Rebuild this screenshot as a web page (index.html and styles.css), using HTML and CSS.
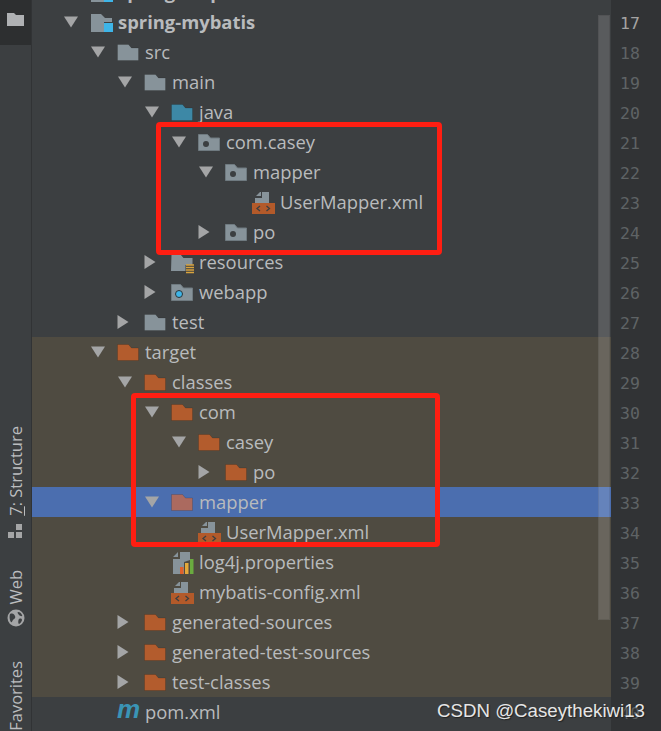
FILE: index.html
```html
<!DOCTYPE html>
<html lang="en">
<head>
<meta charset="utf-8">
<title>Project tree</title>
<link rel="stylesheet" href="styles.css">
</head>
<body>
<svg class="defs" width="0" height="0" aria-hidden="true">
  <defs>
    <symbol id="open" viewBox="0 0 14 12"><path d="M0 0.5h14L7 11.5z" fill="#a4a5a6"/></symbol>
    <symbol id="closed" viewBox="0 0 12 14"><path d="M0.5 0L11.5 7L0.5 14z" fill="#a4a5a6"/></symbol>
    <symbol id="folder" viewBox="0 0 22 17"><path d="M0.5 0.5h11l3 3.5h7v12.5h-21z" fill="currentColor" stroke="#000" stroke-opacity=".14"/></symbol>
    <symbol id="pkg" viewBox="0 0 22 17"><path d="M0.5 0.5h9l3 3.5h9v12.5h-21z" fill="#87939a" stroke="#6f7a80"/><circle cx="8" cy="10" r="3" fill="#3c3f41"/></symbol>
    <symbol id="module" viewBox="0 0 24 24"><path d="M1 3h10l4 4h7v4h-8v10H1z" fill="#87939a"/><rect x="14" y="12" width="9" height="9" fill="#3eb5e8"/></symbol>
    <symbol id="res" viewBox="0 0 24 24"><path d="M0.5 3.5h9l3 3.5h9v7h-7v6h-14.500z" fill="#87939a"/><path d="M15 14h8M15 16.500h8M15 19h8M15 21.500h8" stroke="#d8a33e" stroke-width="1.600"/></symbol>
    <symbol id="web" viewBox="0 0 22 17"><path d="M0.5 0.500h9l3 3.500h9v12.500h-21z" fill="#87939a" stroke="#6f7a80"/><circle cx="8" cy="10" r="3.500" fill="#3eb5e8" stroke="#2e3436"/></symbol>
    <symbol id="xml" viewBox="0 0 24 24"><path d="M8 1l-4 4h5V1zM10 1h7v11H3V7h7z" fill="#87939a"/><rect x="0" y="12" width="23" height="11" fill="#b35a2a"/><path d="M8 15l-3 2.500l3 2.500M14.500 15l3 2.500l-3 2.500" fill="none" stroke="#3c3f41" stroke-width="1.300"/></symbol>
    <symbol id="props" viewBox="0 0 24 24"><path d="M7 1L2 6h5zM9 1h10v8l-6 2v12H2V8h7z" fill="#87939a"/><rect x="9" y="16" width="3.500" height="7" fill="#e0612a"/><rect x="14" y="12" width="3.500" height="11" fill="#e5a93a"/><rect x="19" y="8" width="3.500" height="15" fill="#6aab3f"/></symbol>
  </defs>
</svg>

<div class="app">
  <aside class="sidebar">
    <div class="tool-active">
      <svg class="tool-folder" viewBox="0 0 17 13"><path d="M0 0h7l2 2h8v11H0z" fill="#afb1b3"/></svg>
    </div>
    <div class="tool tool-structure">
      <span class="tool-label"><u>7</u>: Structure</span>
      <svg class="tool-icon-small" viewBox="0 0 15 15"><path d="M8 0h6v6H8zM0 8h6v6H0zM8 8h6v6H8z" fill="#a4a5a6"/></svg>
    </div>
    <div class="tool tool-web">
      <span class="tool-label">Web</span>
      <svg class="tool-icon" viewBox="0 0 18 18"><circle cx="9" cy="9" r="8.500" fill="#a4a5a6"/><path d="M3 5c3-1 4 0 5 2s-1 3-2 4s-1 3-2 2s-2-5-1-8zM11 3c2 0 3 1 4 3s-2 1-3 0s-2-3-1-3zM12 10c2-1 3 0 3 1s-2 4-3 4s-1-4 0-5z" fill="#3c3f41"/></svg>
    </div>
    <div class="tool tool-fav">
      <span class="tool-label">Favorites</span>
    </div>
  </aside>

  <main class="tree">
    <div class="row d0 bold"><span class="arrow"></span><span class="icon"><svg class="i24"><use href="#module"/></svg></span><span class="name">spring-map</span></div>
    <div class="row d0 bold"><span class="arrow"><svg class="tw-open"><use href="#open"/></svg></span><span class="icon"><svg class="i24"><use href="#module"/></svg></span><span class="name">spring-mybatis</span></div>
    <div class="row d1"><span class="arrow"><svg class="tw-open"><use href="#open"/></svg></span><span class="icon grey"><svg class="fld"><use href="#folder"/></svg></span><span class="name">src</span></div>
    <div class="row d2"><span class="arrow"><svg class="tw-open"><use href="#open"/></svg></span><span class="icon grey"><svg class="fld"><use href="#folder"/></svg></span><span class="name">main</span></div>
    <div class="row d3"><span class="arrow"><svg class="tw-open"><use href="#open"/></svg></span><span class="icon teal"><svg class="fld"><use href="#folder"/></svg></span><span class="name">java</span></div>
    <div class="row d4"><span class="arrow"><svg class="tw-open"><use href="#open"/></svg></span><span class="icon"><svg class="fld"><use href="#pkg"/></svg></span><span class="name">com.casey</span></div>
    <div class="row d5"><span class="arrow"><svg class="tw-open"><use href="#open"/></svg></span><span class="icon"><svg class="fld"><use href="#pkg"/></svg></span><span class="name">mapper</span></div>
    <div class="row d6"><span class="arrow"></span><span class="icon"><svg class="i24"><use href="#xml"/></svg></span><span class="name">UserMapper.xml</span></div>
    <div class="row d5"><span class="arrow"><svg class="tw-closed"><use href="#closed"/></svg></span><span class="icon"><svg class="fld"><use href="#pkg"/></svg></span><span class="name">po</span></div>
    <div class="row d3"><span class="arrow"><svg class="tw-closed"><use href="#closed"/></svg></span><span class="icon"><svg class="i24"><use href="#res"/></svg></span><span class="name">resources</span></div>
    <div class="row d3"><span class="arrow"><svg class="tw-closed"><use href="#closed"/></svg></span><span class="icon"><svg class="fld"><use href="#web"/></svg></span><span class="name">webapp</span></div>
    <div class="row d2"><span class="arrow"><svg class="tw-closed"><use href="#closed"/></svg></span><span class="icon grey"><svg class="fld"><use href="#folder"/></svg></span><span class="name">test</span></div>
    <div class="row d1 excluded"><span class="arrow"><svg class="tw-open"><use href="#open"/></svg></span><span class="icon orange"><svg class="fld"><use href="#folder"/></svg></span><span class="name">target</span></div>
    <div class="row d2 excluded"><span class="arrow"><svg class="tw-open"><use href="#open"/></svg></span><span class="icon orange"><svg class="fld"><use href="#folder"/></svg></span><span class="name">classes</span></div>
    <div class="row d3 excluded"><span class="arrow"><svg class="tw-open"><use href="#open"/></svg></span><span class="icon orange"><svg class="fld"><use href="#folder"/></svg></span><span class="name">com</span></div>
    <div class="row d4 excluded"><span class="arrow"><svg class="tw-open"><use href="#open"/></svg></span><span class="icon orange"><svg class="fld"><use href="#folder"/></svg></span><span class="name">casey</span></div>
    <div class="row d5 excluded"><span class="arrow"><svg class="tw-closed"><use href="#closed"/></svg></span><span class="icon orange"><svg class="fld"><use href="#folder"/></svg></span><span class="name">po</span></div>
    <div class="row d3 selected"><span class="arrow"><svg class="tw-open"><use href="#open"/></svg></span><span class="icon dim-orange"><svg class="fld"><use href="#folder"/></svg></span><span class="name">mapper</span></div>
    <div class="row d4 excluded"><span class="arrow"></span><span class="icon"><svg class="i24"><use href="#xml"/></svg></span><span class="name">UserMapper.xml</span></div>
    <div class="row d3 excluded"><span class="arrow"></span><span class="icon"><svg class="i24"><use href="#props"/></svg></span><span class="name">log4j.properties</span></div>
    <div class="row d3 excluded"><span class="arrow"></span><span class="icon"><svg class="i24"><use href="#xml"/></svg></span><span class="name">mybatis-config.xml</span></div>
    <div class="row d2 excluded"><span class="arrow"><svg class="tw-closed"><use href="#closed"/></svg></span><span class="icon orange"><svg class="fld"><use href="#folder"/></svg></span><span class="name">generated-sources</span></div>
    <div class="row d2 excluded"><span class="arrow"><svg class="tw-closed"><use href="#closed"/></svg></span><span class="icon orange"><svg class="fld"><use href="#folder"/></svg></span><span class="name">generated-test-sources</span></div>
    <div class="row d2 excluded"><span class="arrow"><svg class="tw-closed"><use href="#closed"/></svg></span><span class="icon orange"><svg class="fld"><use href="#folder"/></svg></span><span class="name">test-classes</span></div>
    <div class="row d1"><span class="arrow"></span><span class="icon maven">m</span><span class="name">pom.xml</span></div>

    <div class="scrollbar"></div>
    <div class="mark mark-top"></div>
    <div class="mark mark-bottom"></div>
  </main>

  <div class="gutter">
    <div class="ln">16</div><div class="ln current">17</div><div class="ln">18</div><div class="ln">19</div><div class="ln">20</div>
    <div class="ln">21</div><div class="ln">22</div><div class="ln">23</div><div class="ln">24</div><div class="ln">25</div>
    <div class="ln">26</div><div class="ln">27</div><div class="ln">28</div><div class="ln">29</div><div class="ln">30</div>
    <div class="ln">31</div><div class="ln">32</div><div class="ln">33</div><div class="ln">34</div><div class="ln">35</div>
    <div class="ln">36</div><div class="ln">37</div><div class="ln">38</div><div class="ln">39</div><div class="ln">40</div>
  </div>

  <div class="watermark">CSDN @Caseythekiwi13</div>
</div>
</body>
</html>
```
FILE: styles.css
```css
* { box-sizing: border-box; }
html, body { margin: 0; height: 100%; background: #3c3f41; overflow: hidden; }
.defs { position: absolute; }

.app {
  position: relative;
  display: grid;
  grid-template-columns: 32px 579px 50px;
  height: 731px;
  overflow: hidden;
  font-family: "Open Sans", "Noto Sans", sans-serif;
  color: #b9bbbd;
}

/* tool strip */
.sidebar {
  display: flex;
  flex-direction: column;
  align-items: center;
  background: #3c3f41;
  border-right: 1px solid #313335;
  font-size: 16.500px;
  color: #bbbdbf;
}
.tool-active {
  align-self: stretch;
  height: 45px;
  background: #2d2f30;
  display: flex;
  justify-content: center;
  padding-top: 13px;
}
.tool-folder { width: 17px; height: 13px; }
.tool { display: flex; flex-direction: column; align-items: center; }
.tool-structure { margin-top: 381px; gap: 8px; }
.tool-web { margin-top: 31px; gap: 5px; }
.tool-fav { margin-top: 34px; }
.tool-label { writing-mode: vertical-rl; transform: rotate(180deg); line-height: 20px; }
.tool-icon-small { width: 15px; height: 15px; }
.tool-icon { width: 18px; height: 18px; }

/* project tree */
.tree { position: relative; margin-top: -23px; font-size: 18.400px; }
.row { display: flex; align-items: center; height: 30px; white-space: nowrap; }
.name { margin-bottom: 2px; }
.bold { font-weight: 700; }
.excluded { background: #4f4b41; }
.selected { background: #4b6eaf; }
.d0 { padding-left: 32px; }
.d1 { padding-left: 59px; }
.d2 { padding-left: 86px; }
.d3 { padding-left: 113px; }
.d4 { padding-left: 140px; }
.d5 { padding-left: 167px; }
.d6 { padding-left: 194px; }
.arrow { flex: none; width: 26px; display: flex; align-items: center; }
.tw-open { width: 14px; height: 12px; }
.tw-closed { width: 12px; height: 14px; margin-left: -1px; }
.icon { flex: none; width: 28px; height: 30px; display: flex; align-items: center; }
.fld { width: 22px; height: 17px; }
.i24 { width: 24px; height: 24px; margin-top: 2px; }
.grey { color: #87939a; }
.teal { color: #3d88a6; }
.orange { color: #b35c2d; }
.dim-orange { color: #ab6a5f; }
.maven {
  color: #3a94b5;
  font: italic 700 26px/30px "Liberation Sans", sans-serif;
  margin-top: -6px;
}

.scrollbar {
  position: absolute;
  top: 38px;
  right: 1px;
  width: 12px;
  height: 605px;
  background: rgba(255, 255, 255, .15);
  border: 1px solid rgba(0, 0, 0, .08);
}

.mark { position: absolute; border: 5px solid #ff1e12; border-radius: 4px; }
.mark-top { left: 124px; top: 145px; width: 286px; height: 133px; }
.mark-bottom { left: 99px; top: 416px; width: 309px; height: 154px; }

/* line numbers */
.gutter {
  margin-top: -21px;
  background: #313335;
  padding-left: 9px;
  font: 16.500px/30px "DejaVu Sans Mono", monospace;
  color: #5f6365;
}
.ln { height: 30px; }
.current { color: #a4a3a3; }

.watermark {
  position: absolute;
  left: 437px;
  top: 699px;
  font: 18.700px/24px "Liberation Sans", sans-serif;
  color: #e6e6e6;
  text-shadow: 1px 1px 1px #222;
}
```
